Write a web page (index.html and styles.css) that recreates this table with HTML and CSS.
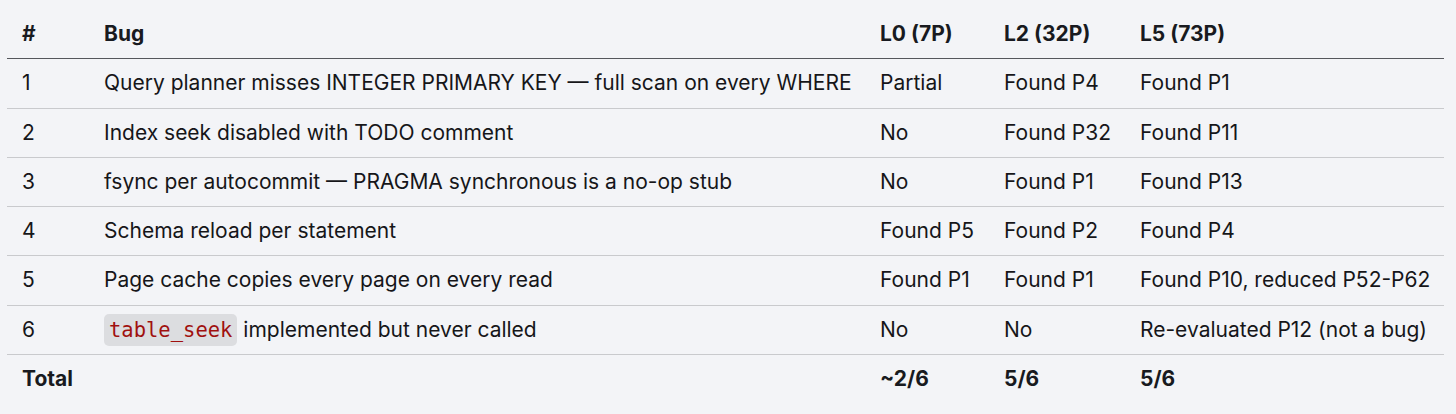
FILE: index.html
```html
<!DOCTYPE html>
<html>
<head>
<meta charset="utf-8">
<link rel="stylesheet" href="styles.css">
</head>
<body>
<div class="wrap">
<table class="bugs">
<colgroup>
<col class="c-num"><col class="c-bug"><col class="c-l0"><col class="c-l2"><col class="c-l5">
</colgroup>
<thead>
<tr><th>#</th><th>Bug</th><th>L0 (7P)</th><th>L2 (32P)</th><th>L5 (73P)</th></tr>
</thead>
<tbody>
<tr><td>1</td><td>Query planner misses INTEGER PRIMARY KEY — full scan on every WHERE</td><td>Partial</td><td>Found P4</td><td>Found P1</td></tr>
<tr><td>2</td><td>Index seek disabled with TODO comment</td><td>No</td><td>Found P32</td><td>Found P11</td></tr>
<tr><td>3</td><td>fsync per autocommit — PRAGMA synchronous is a no-op stub</td><td>No</td><td>Found P1</td><td>Found P13</td></tr>
<tr><td>4</td><td>Schema reload per statement</td><td>Found P5</td><td>Found P2</td><td>Found P4</td></tr>
<tr><td>5</td><td>Page cache copies every page on every read</td><td>Found P1</td><td>Found P1</td><td>Found P10, reduced P52-P62</td></tr>
<tr><td>6</td><td><code class="code">table_seek</code> implemented but never called</td><td>No</td><td>No</td><td>Re-evaluated P12 (not a bug)</td></tr>
<tr class="total"><td>Total</td><td></td><td>~2/6</td><td>5/6</td><td>5/6</td></tr>
</tbody>
</table>
</div>
</body>
</html>
```
FILE: styles.css
```css
html, body {
  margin: 0;
  background: #f3f4f7;
}
.wrap {
  padding: 8px 12px 0 7px;
}
.bugs {
  width: 1437px;
  table-layout: fixed;
  border-collapse: collapse;
  font-family: Inter, "Noto Sans", sans-serif;
  font-size: 21px;
  line-height: 24.3px;
  color: #161619;
}
.c-num { width: 82px; }
.c-bug { width: 776px; }
.c-l0 { width: 124px; }
.c-l2 { width: 136px; }
.c-l5 { width: auto; }
.bugs th {
  text-align: left;
  font-weight: 700;
  color: #181a20;
  padding: 14px 0 12px 15px;
  border-bottom: 1.5px solid #55575c;
}
.bugs td {
  padding: 12px 0 12px 15px;
  border-bottom: 1px solid #c9cacd;
  white-space: nowrap;
}
.bugs tr.total td {
  font-weight: 700;
  border-bottom: none;
  color: #181a20;
}
.code {
  font-family: "DejaVu Sans Mono", monospace;
  font-size: 20.5px;
  color: #a0100f;
  background: #dcdde0;
  border-radius: 5px;
  padding: 4px 5px;
}
```
